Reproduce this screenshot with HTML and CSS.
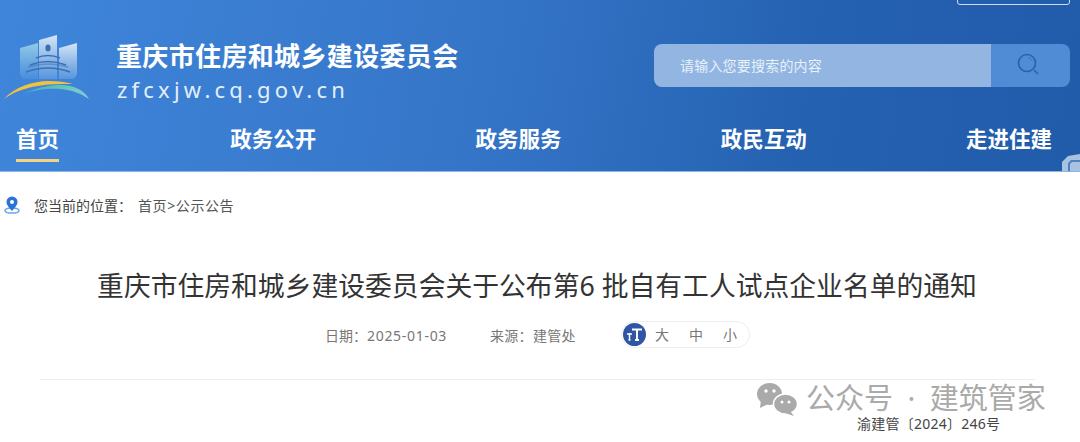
FILE: index.html
```html
<!DOCTYPE html>
<html lang="zh-CN">

<head>
  <meta charset="UTF-8" />
  <meta name="viewport" content="width=device-width, initial-scale=1.0" />
  <title>重庆市住房和城乡建设委员会</title>
  <link rel="stylesheet" href="styles.css">
</head>

<body>
  <header class="site-header">
    <a href="#" class="top-link"></a>

    <div class="head-row">
      <a href="#" class="site-logo">
        <svg width="100" height="85" viewBox="0 0 100 85">
          <defs>
            <linearGradient id="fadeA" x1="0" y1="0" x2="0" y2="1">
              <stop offset="0" stop-color="#8fcbe8" />
              <stop offset="1" stop-color="#8fc0e8" stop-opacity="0.15" />
            </linearGradient>
            <linearGradient id="fadeB" x1="0" y1="0" x2="0" y2="1">
              <stop offset="0" stop-color="#d5e6f5" />
              <stop offset="1" stop-color="#c5dcf2" stop-opacity="0.2" />
            </linearGradient>
            <linearGradient id="tealArc" x1="0" y1="0" x2="1" y2="0">
              <stop offset="0" stop-color="#4aa8c8" />
              <stop offset="0.6" stop-color="#62c6b8" />
              <stop offset="1" stop-color="#8cc8d8" />
            </linearGradient>
          </defs>
          <polygon points="20,23 38,18 38,54 23,54 20,50" fill="url(#fadeA)" />
          <polygon points="39,15 57,10 57,54 39,54" fill="url(#fadeB)" />
          <polygon points="59,23 77,18 77,50 74,54 59,54" fill="url(#fadeB)" />
          <ellipse cx="48" cy="23" rx="2.6" ry="3.6" fill="#3a6fb0" />
          <g fill="none" stroke="#3b70b2" stroke-width="1.6">
            <path d="M36,33 Q48,28 60,33" />
            <path d="M30,40 Q48,33 66,40" />
            <path d="M26,47 Q48,39 70,47" />
            <path d="M28,42 Q48,36 68,42" opacity="0.5" />
          </g>
          <path d="M4,74 C14,62 34,56 48,56 C58,56 66,57 73,59 C60,59 48,59 38,61 C24,63 14,67 4,74 Z" fill="#f3c23a" />
          <path d="M23,69 C38,62 50,60 60,60 C74,60 84,65 89,74 C80,68 72,65 60,64 C46,63 34,65 23,69 Z" fill="url(#tealArc)" />
        </svg>
      </a>
      <div class="site-name">
        <h2>重庆市住房和城乡建设委员会</h2>
        <p>zfcxjw.cq.gov.cn</p>
      </div>
      <form class="search-box">
        <span class="search-input">请输入您要搜索的内容</span>
        <span class="search-btn">
          <svg width="24" height="24" viewBox="0 0 24 24" fill="none" stroke="#2a62a8">
            <circle cx="10" cy="10" r="8.5" stroke-width="1.7" />
            <path d="M17 17l4 4" stroke-width="1.6" />
            <path d="M11 4.500a6 6 0 0 1 4 3" stroke-width="1" opacity="0.6" />
          </svg>
        </span>
      </form>
    </div>

    <nav class="main-nav">
      <a href="#" class="active">首页</a>
      <a href="#">政务公开</a>
      <a href="#">政务服务</a>
      <a href="#">政民互动</a>
      <a href="#">走进住建</a>
    </nav>

    <svg class="corner-mark" width="18" height="17" viewBox="0 0 18 17">
      <path d="M0 17V8L6 2 18 0V17Z" fill="#a8c2e2" />
      <path d="M6 17V9L9 6H18V8H10L8 10V17Z" fill="#4f80c0" />
    </svg>
  </header>

  <div class="crumbs">
    <svg width="16" height="18" viewBox="0 0 16 18">
      <ellipse cx="8" cy="14.500" rx="7" ry="2.600" fill="none" stroke="#6fa5e6" stroke-width="1.500" />
      <path d="M8 0.500a5.500 5.500 0 0 1 5.500 5.500c0 3.400-3.300 6-5.500 9-2.200-3-5.500-5.600-5.500-9a5.500 5.500 0 0 1 5.500-5.500z" fill="#2b72d6" />
      <circle cx="8" cy="6" r="2" fill="#fff" />
    </svg>
    <span class="crumbs-label">您当前的位置：</span>
    <a href="#" class="crumbs-link">首页&gt;公示公告</a>
  </div>

  <main class="article">
    <h1>重庆市住房和城乡建设委员会关于公布第6 批自有工人试点企业名单的通知</h1>
    <div class="article-meta">
      <span class="meta-date">日期：<span class="meta-num">2025-01-03</span></span>
      <span class="meta-source">来源：建管处</span>
      <div class="font-size">
        <span class="font-icon">
          <svg width="17" height="13" viewBox="0 0 17 13" fill="none" stroke="#fff">
            <path d="M6 1.500h10M11 1v11M9 12h4" stroke-width="2" />
            <path d="M1 6h5M3.500 5v7M2.500 12h2" stroke-width="1.500" />
          </svg>
        </span>
        <a href="#">大</a>
        <a href="#">中</a>
        <a href="#">小</a>
      </div>
    </div>
    <hr class="divider">
    <p class="doc-no">渝建管〔2024〕246号</p>
  </main>

  <!-- watermark sits on top of the article -->
  <div class="watermark">
    <svg width="41" height="33" viewBox="0 0 41 33" fill="#aaa">
      <ellipse cx="12.500" cy="11" rx="12.500" ry="11" />
      <path d="M4 17l-1 8 8-4z" />
      <ellipse cx="28.500" cy="21" rx="12" ry="10" stroke="#fff" stroke-width="1.500" />
      <path d="M33 28l4 5-9-3z" />
      <circle cx="9" cy="8" r="1.700" fill="#fff" />
      <circle cx="17" cy="8" r="1.700" fill="#fff" />
      <circle cx="25" cy="19" r="1.500" fill="#fff" />
      <circle cx="32" cy="19" r="1.500" fill="#fff" />
    </svg>
    <span class="watermark-text">公众号 · 建筑管家</span>
  </div>
</body>

</html>
```

FILE: styles.css
```css
body {
  margin: 0;
  height: 442px;
  overflow: hidden;
  position: relative;
  background-color: #fff;
  font-family: "Noto Sans", "Noto Sans CJK SC", sans-serif;
}

a {
  color: inherit;
  text-decoration: none;
}

.site-header {
  position: relative;
  height: 172px;
  box-sizing: border-box;
  overflow: hidden;
  border-bottom: 1px solid #8db6e6;
  background: linear-gradient(100deg, #3f86db 0%, #3575c8 45%, #2461b0 75%, #215cab 100%);
  color: #fff;
}

.top-link {
  position: absolute;
  top: -20px;
  right: 10px;
  width: 111px;
  height: 23px;
  border: 1px solid #cfdff2;
  border-radius: 3px;
}

.head-row {
  display: flex;
  align-items: flex-start;
  height: 110px;
  box-sizing: border-box;
  padding: 25px 10px 0 0;
}

.site-logo {
  display: block;
  width: 100px;
  height: 85px;
}

.site-name {
  margin: 14px 0 0 16px;
}

.site-name h2 {
  margin: 0;
  font-size: 26px;
  line-height: 34px;
  letter-spacing: 0.35px;
  font-weight: 700;
  white-space: nowrap;
}

.site-name p {
  margin: 3px 0 0 1px;
  font-size: 22px;
  line-height: 26px;
  letter-spacing: 4.2px;
  color: #e3eefb;
}

.search-box {
  display: flex;
  width: 416px;
  height: 43px;
  margin: 19px 0 0 auto;
  border-radius: 8px;
  overflow: hidden;
}

.search-input {
  flex: 1;
  padding-left: 26px;
  background-color: #92b6e1;
  color: #e8f0fa;
  font-size: 14px;
  line-height: 43px;
  letter-spacing: 0.2px;
}

.search-btn {
  display: flex;
  align-items: center;
  justify-content: center;
  width: 79px;
  background-color: #508bd6;
}

.search-btn svg {
  margin: 0 3px 2px 0;
}

.main-nav {
  display: flex;
  justify-content: space-between;
  align-items: flex-start;
  padding: 14px 28px 0 16px;
}

.main-nav a {
  font-size: 21.5px;
  line-height: 30px;
  font-weight: 700;
  padding-bottom: 5px;
  border-bottom: 3px solid transparent;
}

.main-nav a.active {
  margin-right: 12px;
  border-bottom-color: #f8d27e;
}

.corner-mark {
  position: absolute;
  right: 0;
  bottom: 0;
}

.crumbs {
  display: flex;
  align-items: center;
  height: 18px;
  padding: 24px 0 0 4px;
  font-size: 14px;
  color: #555;
}

.crumbs-label {
  margin: 0 6px 0 14px;
  color: #444;
}

.crumbs-link {
  letter-spacing: 0.6px;
}

.article h1 {
  margin: 52px 0 0;
  padding-right: 6px;
  text-align: center;
  font-size: 26.8px;
  line-height: 40px;
  font-weight: 400;
  color: #333;
  white-space: nowrap;
}

.article-meta {
  display: flex;
  align-items: center;
  height: 27px;
  margin-top: 15px;
  padding-left: 325px;
  font-size: 14px;
  color: #777;
}

.meta-date {
  width: 165px;
}

.meta-num {
  letter-spacing: 0.7px;
}

.meta-source {
  width: 131px;
  letter-spacing: 0.3px;
}

.font-size {
  display: flex;
  align-items: center;
  width: 129px;
  height: 27px;
  box-sizing: border-box;
  border: 1px solid #eee;
  border-radius: 14px;
  padding-left: 1px;
  font-size: 14px;
}

.font-icon {
  display: flex;
  flex: none;
  align-items: center;
  justify-content: center;
  width: 23px;
  height: 23px;
  margin-right: 9px;
  border-radius: 50%;
  background-color: #2f55a4;
}

.font-size a {
  width: 14px;
  margin-right: 20px;
  line-height: 25px;
}

.font-size a:last-child {
  margin-right: 0;
}

.divider {
  height: 1px;
  margin: 31px 45px 0 40px;
  border: 0;
  background-color: #eee;
}

.doc-no {
  margin: 36px 0 0 857px;
  font-size: 14px;
  line-height: 16px;
  letter-spacing: 0.25px;
  color: #444;
  white-space: nowrap;
}

.watermark {
  position: absolute;
  left: 757px;
  top: 383px;
  display: flex;
  align-items: center;
  gap: 8px;
  color: #aaa;
  white-space: nowrap;
}

.watermark-text {
  margin-bottom: 4px;
  font-size: 29px;
  line-height: 29px;
  word-spacing: 7px;
}
```
